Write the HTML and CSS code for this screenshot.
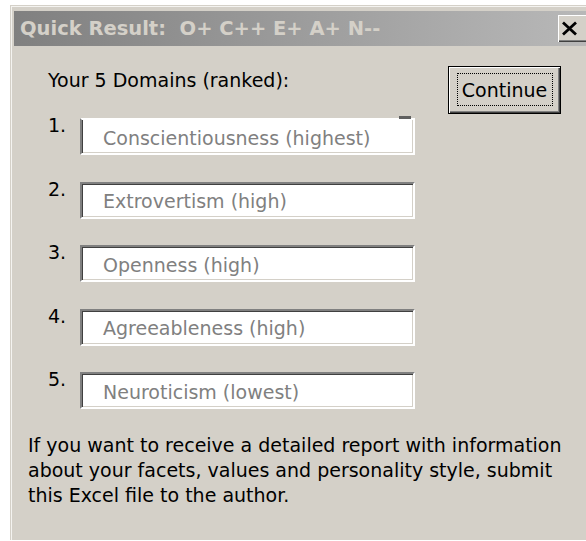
FILE: index.html
```html
<!DOCTYPE html>
<html lang="en">
<head>
<meta charset="utf-8">
<title>Quick Result</title>
<link rel="stylesheet" href="styles.css">
</head>
<body>
<div class="frame">
  <div class="frame-inner">
    <div class="titlebar">
      <span class="title">Quick Result:&nbsp; O+ C++ E+ A+ N--</span>
      <button class="close" type="button" aria-label="Close">
        <svg width="17" height="15" viewBox="0 0 17 15" aria-hidden="true">
          <path d="M2 1.5 L15 13.5 M15 1.5 L2 13.5" stroke="#000" stroke-width="2.8" fill="none"/>
        </svg>
      </button>
    </div>
    <div class="dialog">
      <div class="top">
        <div class="domains">
          <div class="heading">Your 5 Domains (ranked):</div>
          <ol class="ranks">
            <li class="rank"><span class="num">1.</span><span class="field field-first">Conscientiousness (highest)</span></li>
            <li class="rank"><span class="num">2.</span><span class="field">Extrovertism (high)</span></li>
            <li class="rank"><span class="num">3.</span><span class="field">Openness (high)</span></li>
            <li class="rank"><span class="num">4.</span><span class="field">Agreeableness (high)</span></li>
            <li class="rank"><span class="num">5.</span><span class="field">Neuroticism (lowest)</span></li>
          </ol>
        </div>
        <button class="continue" type="button"><span class="focus">Continue</span></button>
      </div>
      <p class="note">If you want to receive a detailed report with information<br>about your facets, values and personality style, submit<br>this Excel file to the author.</p>
    </div>
  </div>
</div>
</body>
</html>
```

FILE: styles.css
```css
html, body {
  margin: 0;
  padding: 0;
  background: #ffffff;
  height: 100%;
  overflow: hidden;
}

body {
  font-family: "DejaVu Sans", Tahoma, sans-serif;
  font-size: 19px;
  color: #000;
}

/* window frame: light outer edge, white inner edge */
.frame {
  margin: 5px 0 0 10px;
  border-top: 1px solid #d4d0c8;
  border-left: 1px solid #d4d0c8;
  height: calc(100% - 6px);
  box-sizing: border-box;
}

.frame-inner {
  border-top: 1px solid #f4f3f0;
  border-left: 1px solid #f4f3f0;
  background: #d4d0c8;
  padding: 4px 0 0 2px;
  height: 100%;
  box-sizing: border-box;
}

/* inactive caption */
.titlebar {
  height: 35px;
  display: flex;
  align-items: center;
  justify-content: space-between;
  background: linear-gradient(to right, #808080, #b8b8b8);
  padding-left: 6px;
}

.title {
  font-weight: bold;
  font-size: 19.5px;
  color: #d4d0c8;
  white-space: nowrap;
}

.close {
  width: 34px;
  height: 27px;
  margin: 0 -6px 1px 0;
  padding: 0 0 0 3px;
  display: flex;
  align-items: center;
  justify-content: flex-start;
  background: #d4d0c8;
  border: 0;
  box-shadow: inset 1px 1px #ffffff, inset -1px -1px #404040, inset -2px -2px #808080;
}

.dialog {
  padding: 23px 0 0 14px;
}

.top {
  display: flex;
  align-items: flex-start;
}

.domains {
  flex: none;
  padding-left: 20px;
  width: 367px;
}

.heading {
  line-height: 23px;
}

.ranks {
  list-style: none;
  margin: 26px 0 0;
  padding: 0;
  display: flex;
  flex-direction: column;
  gap: 26.5px;
}

.rank {
  display: flex;
  align-items: flex-start;
}

.num {
  width: 32px;
  line-height: 23px;
  margin-top: -4px;
}

/* sunken, read-only edit box */
.field {
  position: relative;
  width: 335px;
  height: 37px;
  box-sizing: border-box;
  display: flex;
  align-items: center;
  padding: 2px 0 0 21px;
  background: #ffffff;
  color: #808080;
  white-space: nowrap;
  border: 2px solid;
  border-color: #808080 #ffffff #ffffff #808080;
  box-shadow: inset 1px 1px #404040, inset -1px -1px #d4d0c8;
}

.field-first {
  border-top-color: #ffffff;
  box-shadow: inset 1px 0 #404040, inset -1px -1px #d4d0c8;
}

.field-first::after {
  content: "";
  position: absolute;
  right: 2px;
  top: -4px;
  width: 12px;
  height: 3px;
  background: #606060;
}

.continue {
  flex: none;
  margin: -3px 0 0 33px;
  width: 113px;
  height: 48px;
  padding: 0;
  font: inherit;
  color: #000;
  background: #d4d0c8;
  border: 1px solid #000;
  box-shadow: inset 1px 1px #ffffff, inset -1px -1px #404040, inset -2px -2px #808080;
  display: flex;
  align-items: center;
  justify-content: center;
}

.focus {
  display: flex;
  align-items: center;
  justify-content: center;
  width: 96px;
  height: 33px;
  box-sizing: border-box;
  border: 1px dotted #000;
  margin-bottom: 1px;
}

.note {
  margin: 24px 0 0;
  line-height: 25px;
  white-space: nowrap;
}
```
